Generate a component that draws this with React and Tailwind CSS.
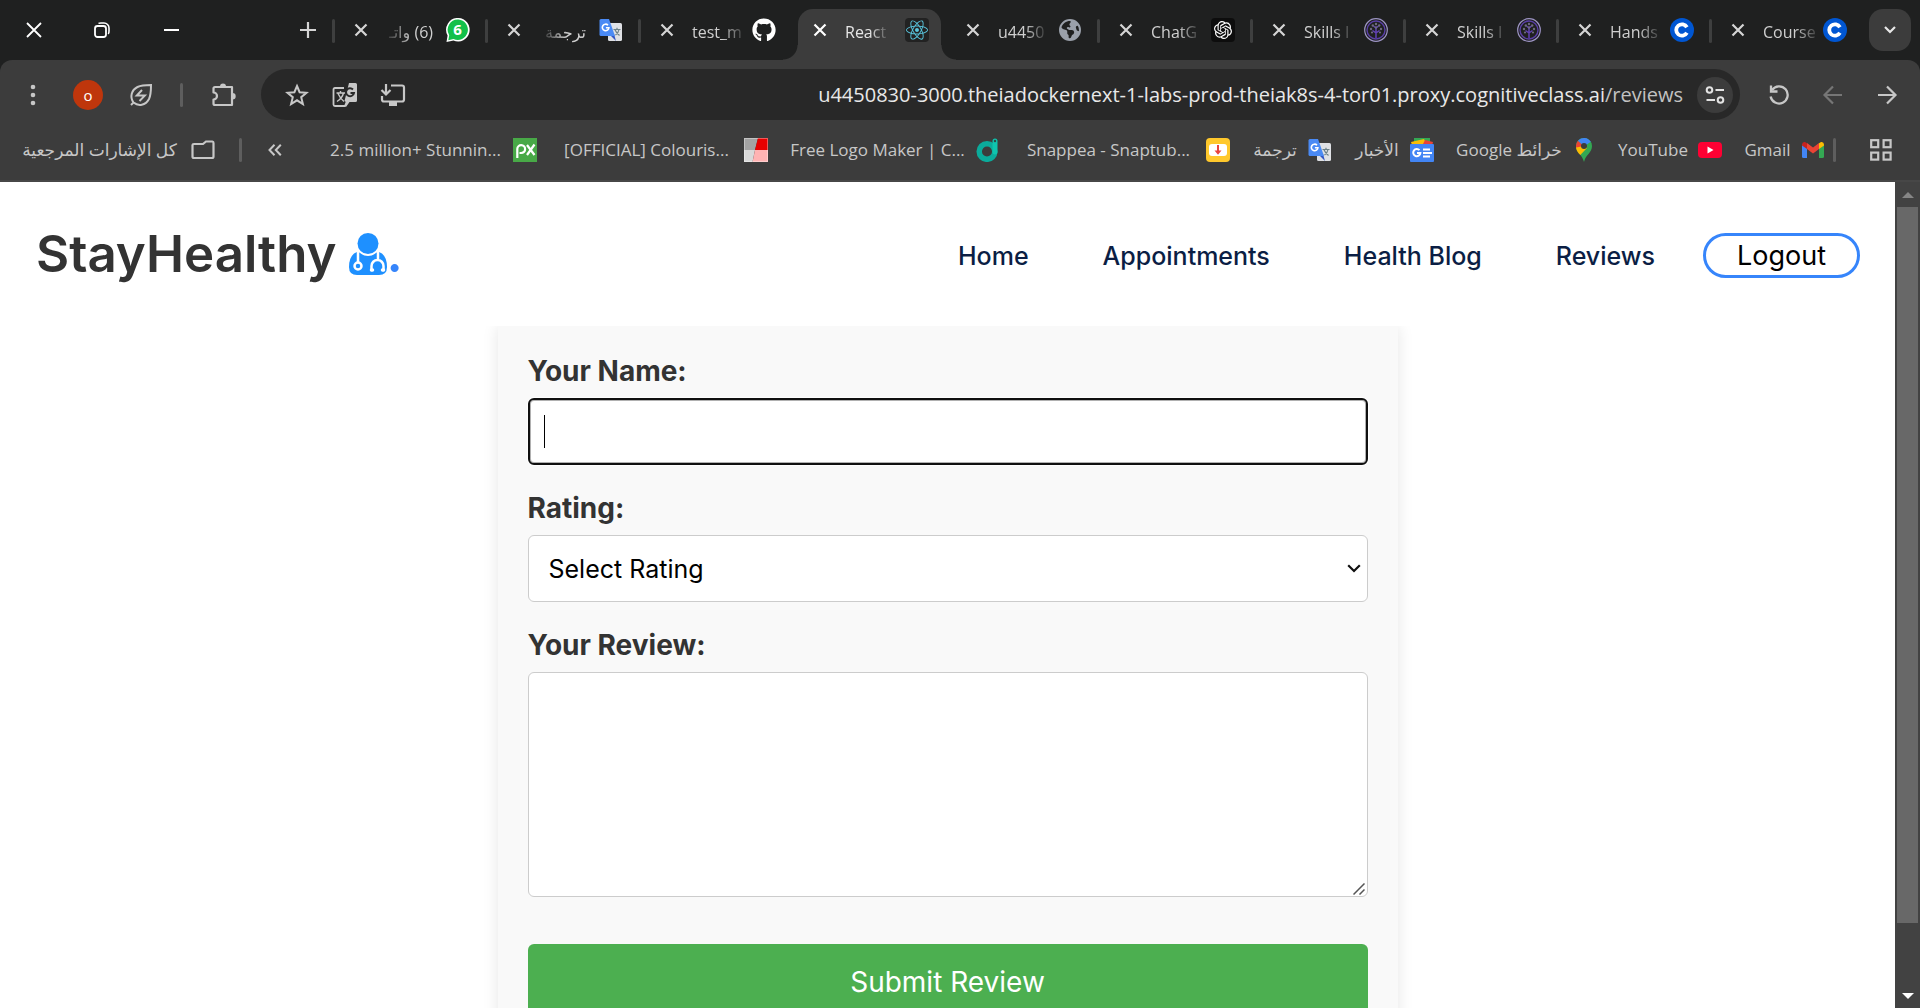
import React from "react";
import { FaGithub, FaReact, FaEarthAmericas } from "react-icons/fa6";
import { SiOpenai } from "react-icons/si";

const chromeFont = "font-['Open_Sans','Noto_Sans','DejaVu_Sans',sans-serif]";
const siteFont = "font-['Inter','Open_Sans',sans-serif]";

function TranslateLogo() {
  return (
    <svg viewBox="0 0 24 24" className="size-6 shrink-0" aria-hidden="true">
      <rect x="9" y="5" width="14" height="18" rx="1.5" fill="#dfe1e5" />
      <path d="M12 18 L17 23 L15 16 Z" fill="#3257c4" />
      <path d="M2 1 H10 L16 18 H2 Q0.500 18 0.500 16.500 V2.500 Q0.500 1 2 1 Z" fill="#4a8af4" />
      <path d="M9 7.200 A3.300 3.300 0 1 0 9.900 9.700 H6.900" fill="none" stroke="#fff" strokeWidth="1.600" />
      <path d="M14.500 11.500 H21.500 M18 9.800 V11.500 M20 11.500 C19.500 14.500 18 16 16.500 17 M16 11.800 C17 14.500 18.500 16 20.500 17.500" fill="none" stroke="#6b8087" strokeWidth="1.200" />
    </svg>
  );
}

function WhatsappLogo() {
  return (
    <svg viewBox="0 0 24 24" className="size-6 shrink-0" aria-hidden="true">
      <path d="M12.500 0 A11.500 11.800 0 1 1 7.500 22.600 L0.500 24 L1.600 17.500 A11.500 11.800 0 0 1 12.500 0 Z" fill="#fff" />
      <path d="M12.500 1.500 A10.100 10.300 0 1 1 7.500 21.100 L2.300 22.300 L3.200 17.200 A10.100 10.300 0 0 1 12.500 1.500 Z" fill="#12c04a" />
      <text x="11.500" y="17" textAnchor="middle" fontSize="15" fontWeight="700" fill="#fff" fontFamily="Open Sans, sans-serif">6</text>
    </svg>
  );
}

function SkillsLogo() {
  return (
    <svg viewBox="0 0 24 24" className="size-6 shrink-0" fill="none" aria-hidden="true">
      <circle cx="12" cy="12" r="11.300" stroke="#9d94c4" strokeWidth="1.200" />
      <circle cx="12" cy="12" r="9" stroke="#5a3fa6" strokeWidth="1.400" />
      <path d="M12 10 V20 M12 15 L8.500 12.500 M12 15 L15.500 12.500 M12 10 L9.500 8 M12 10 L14.500 8" stroke="#6242b5" strokeWidth="1.500" />
      <g fill="#6e6a80">
        <circle cx="12" cy="6" r="1.200" /><circle cx="8.800" cy="7.500" r="1.200" /><circle cx="15.200" cy="7.500" r="1.200" />
        <circle cx="7" cy="11" r="1.200" /><circle cx="17" cy="11" r="1.200" /><circle cx="12" cy="9.500" r="1.200" />
        <circle cx="8" cy="14.500" r="1.100" /><circle cx="16" cy="14.500" r="1.100" />
      </g>
    </svg>
  );
}

function CourseraLogo() {
  return (
    <svg viewBox="0 0 24 24" className="size-6 shrink-0" aria-hidden="true">
      <circle cx="12" cy="12" r="12" fill="#0056d2" />
      <path d="M16.900 9.200 A5.700 5.700 0 1 0 16.900 14.800" fill="none" stroke="#fff" strokeWidth="3.800" />
    </svg>
  );
}

function GithubLogo() {
  return <FaGithub className="size-6 shrink-0 text-white" />;
}

function ReactLogo() {
  return (
    <span className="grid size-6 shrink-0 place-items-center rounded bg-[#222222]">
      <FaReact className="size-[22px] text-[#58c4dc]" />
    </span>
  );
}

function GlobeLogo() {
  return <FaEarthAmericas className="size-[22px] shrink-0 text-[#9aa0aa]" />;
}

function ChatLogo() {
  return (
    <span className="grid size-6 shrink-0 place-items-center rounded bg-[#0d0d0d]">
      <SiOpenai className="size-[18px] text-white" />
    </span>
  );
}

const tabs = [
  { title: "(6) واتـ", logo: WhatsappLogo, rtl: true },
  { title: "ترجمة", logo: TranslateLogo, rtl: true },
  { title: "test_m", logo: GithubLogo },
  { title: "React", logo: ReactLogo, active: true },
  { title: "u4450", logo: GlobeLogo },
  { title: "ChatG", logo: ChatLogo },
  { title: "Skills I", logo: SkillsLogo },
  { title: "Skills I", logo: SkillsLogo },
  { title: "Hands", logo: CourseraLogo },
  { title: "Course", logo: CourseraLogo },
];

function Tab({ tab, divider }) {
  const Logo = tab.logo;
  return (
    <div className="relative flex h-full min-w-0 flex-1 items-end">
      {tab.active && (
        <div className="absolute inset-x-[5px] top-[9px] bottom-0 rounded-t-[15px] bg-[#3c3c3c]">
          <span className="absolute bottom-0 -left-[15px] size-[15px] bg-[radial-gradient(circle_at_0_0,transparent_14px,#3c3c3c_15px)]" />
          <span className="absolute -right-[15px] bottom-0 size-[15px] bg-[radial-gradient(circle_at_100%_0,transparent_14px,#3c3c3c_15px)]" />
        </div>
      )}
      <div className="relative flex h-full w-full items-center justify-between pr-[17px] pl-5">
        <button type="button" aria-label="Close tab" className="grid size-[14px] shrink-0 place-items-center">
          <svg viewBox="0 0 14 14" className={tab.active ? "size-[14px] text-white" : "size-[14px] text-[#d5d5d5]"} aria-hidden="true">
            <path d="M1.500 1.500 L12.500 12.500 M12.500 1.500 L1.500 12.500" stroke="currentColor" strokeWidth="2.200" />
          </svg>
        </button>
        <span className={tab.rtl ? "ml-auto mr-[13px] pt-1" : "mr-auto ml-[18px] pt-1"}>
          <span
            dir={tab.rtl ? "rtl" : "ltr"}
            className={
              "block text-[16px] leading-6 whitespace-nowrap " +
              (tab.rtl
                ? "[mask-image:linear-gradient(to_left,black_45%,#0003)] "
                : "[mask-image:linear-gradient(to_right,black_60%,#0003)] ") +
              (tab.active ? "text-[#e6e6e6]" : "text-[#cfcfcf]")
            }
          >
            {tab.title}
          </span>
        </span>
        <span className="grid size-6 shrink-0 place-items-center"><Logo /></span>
      </div>
      {divider && <span className="absolute top-[19px] -right-px h-6 w-[3px] rounded-full bg-[#3e3f3f]" />}
    </div>
  );
}

function TabStrip() {
  return (
    <div className="flex h-[60px] shrink-0 items-center bg-[#1f2020] pr-[9px]">
      <div className="flex h-full w-[334px] shrink-0 items-center">
        <button type="button" aria-label="Close" className="grid h-full w-[67px] place-items-center text-white">
          <svg viewBox="0 0 16 16" className="size-4" aria-hidden="true"><path d="M1 1 L15 15 M15 1 L1 15" stroke="currentColor" strokeWidth="1.800" /></svg>
        </button>
        <button type="button" aria-label="Restore" className="grid h-full w-[70px] place-items-center text-white">
          <svg viewBox="0 0 16 16" className="size-4" fill="none" aria-hidden="true">
            <rect x="1" y="4" width="11" height="11" rx="2.500" stroke="currentColor" strokeWidth="1.800" />
            <path d="M4.500 1.500 C5 1 6 1 7 1 H10 A5 5 0 0 1 15 6 V9 C15 10.500 14.800 11.500 14.200 12" stroke="currentColor" strokeWidth="1.600" />
          </svg>
        </button>
        <button type="button" aria-label="Minimise" className="grid h-full w-[68px] place-items-center text-white">
          <span className="h-[2px] w-[15px] bg-white" />
        </button>
        <button type="button" aria-label="New tab" className="ml-auto grid h-full w-[53px] place-items-center text-[#d5d5d5]">
          <svg viewBox="0 0 16 16" className="size-4" aria-hidden="true"><path d="M8 0 V16 M0 8 H16" stroke="currentColor" strokeWidth="2.200" /></svg>
        </button>
      </div>
      <div className="relative flex h-full min-w-0 flex-1">
        <span className="absolute top-[19px] -left-[2px] h-6 w-[3px] rounded-full bg-[#3e3f3f]" />
        {tabs.map((tab, i) => (
          <Tab key={i} tab={tab} divider={!tab.active && i < tabs.length - 1 && !tabs[i + 1].active} />
        ))}
      </div>
      <button type="button" aria-label="Search tabs" className="ml-[5px] grid size-[42px] shrink-0 place-items-center rounded-[14px] bg-[#3c3c3c] text-[#e8e8e8]">
        <svg viewBox="0 0 12 8" className="h-2 w-3" fill="none" aria-hidden="true"><path d="M1 1 L6 6 L11 1" stroke="currentColor" strokeWidth="2.200" /></svg>
      </button>
    </div>
  );
}

function Toolbar() {
  return (
    <div className="bg-[#1f2020]">
      <div className="flex h-[69px] items-center rounded-t-xl bg-[#3c3c3c] text-[#c7c7c7]">
        <button type="button" aria-label="Menu" className="grid h-10 w-[66px] shrink-0 place-items-center">
          <svg viewBox="0 0 6 22" className="h-[22px] w-[6px]" fill="currentColor" aria-hidden="true"><circle cx="3" cy="3" r="2.300" /><circle cx="3" cy="11" r="2.300" /><circle cx="3" cy="19" r="2.300" /></svg>
        </button>
        <button type="button" aria-label="Profile" className="ml-[7px] grid size-[30px] shrink-0 place-items-center rounded-full bg-[#bf360c] text-[15px] leading-5 text-white">o</button>
        <button type="button" aria-label="Energy saver" className="ml-[26px] shrink-0">
          <svg viewBox="0 0 24 24" className="size-6" fill="none" stroke="currentColor" strokeWidth="2" aria-hidden="true">
            <path d="M4.500 19.500 C0.500 14 2.500 7 8.500 4 C12.500 2 17 2 22 2 C22 7 22 12 20 16 C16.500 22.500 9.500 23.500 4.500 19.500 Z M4.500 19.500 L2 22" />
            <path d="M13 7 L7.800 12.600 H15.800 L10.500 18" strokeWidth="2" />
          </svg>
        </button>
        <span className="ml-[27px] h-6 w-[3px] shrink-0 rounded-full bg-[#5e5e5e]" />
        <button type="button" aria-label="Extensions" className="ml-[29px] shrink-0">
          <svg viewBox="0 0 24 24" className="size-6" fill="none" aria-hidden="true">
            <path d="M3 4 H20 V22 H3 Q1.500 22 1.500 20.500 V16.500 A3.500 3.500 0 0 0 1.500 9.500 V5.500 Q1.500 4 3 4 Z" stroke="currentColor" strokeWidth="2.200" strokeLinejoin="round" />
            <path d="M8 3.500 A3 3 0 0 1 14 3.500 Z M20.500 10 A3.200 3.200 0 0 1 20.500 16.400 Z" fill="currentColor" />
          </svg>
        </button>
        <div className="ml-[25px] flex h-[51px] min-w-0 flex-1 items-center rounded-full bg-[#282828] pr-[7px] pl-6">
          <button type="button" aria-label="Bookmark this page" className="shrink-0">
            <svg viewBox="0 0 24 24" className="size-6" fill="none" stroke="currentColor" strokeWidth="2" aria-hidden="true">
              <path d="M12 3 L14.600 9.200 L21.500 9.700 L16.200 14.200 L17.900 21 L12 17.300 L6.100 21 L7.800 14.200 L2.500 9.700 L9.400 9.200 Z" />
            </svg>
          </button>
          <button type="button" aria-label="Translate this page" className="ml-[23px] shrink-0">
            <svg viewBox="0 0 26 26" className="size-[26px]" fill="none" aria-hidden="true">
              <path d="M12 6 H3 Q1.500 6 1.500 7.500 V22.500 Q1.500 24 3 24 H13 L15 19" stroke="currentColor" strokeWidth="1.800" />
              <path d="M17 1 H23.500 Q25 1 25 2.500 V18.500 Q25 20 23.500 20 H17.500 L14 25 V20 L12.500 19 Z" fill="currentColor" />
              <path d="M21 7.500 A4 4 0 1 0 22 11 H18.500" stroke="#282828" strokeWidth="1.900" />
              <path d="M4.500 11 H13 M8.500 9 V11 M11.500 11 C10.500 15 7.500 18 5 19.500 M6 11.500 C7.500 15 9.500 17.500 12 19.500" stroke="currentColor" strokeWidth="1.400" />
            </svg>
          </button>
          <button type="button" aria-label="Install" className="ml-[22px] shrink-0">
            <svg viewBox="0 0 26 24" className="h-6 w-[26px]" fill="none" stroke="currentColor" strokeWidth="2.200" aria-hidden="true">
              <path d="M11 2.500 H22 Q24 2.500 24 4.500 V16.500 Q24 18.500 22 18.500 H4 Q2 18.500 2 16.500 V13" />
              <path d="M6 1 V11 M1.500 7 L6 11.500 L10.500 7" />
              <path d="M9 21 H17" strokeWidth="4" />
            </svg>
          </button>
          <div className="ml-auto min-w-0 overflow-hidden text-[20px] leading-7 whitespace-nowrap text-[#e8e8e8]">
            u4450830-3000.theiadockernext-1-labs-prod-theiak8s-4-tor01.proxy.cognitiveclass.ai<span className="text-[#c2c2c2]">/reviews</span>
          </div>
          <button type="button" aria-label="Site information" className="ml-[14px] grid size-9 shrink-0 place-items-center rounded-full bg-[#3c3c3c] text-[#e3e3e3]">
            <svg viewBox="0 0 20 18" className="h-[18px] w-5" fill="none" stroke="currentColor" strokeWidth="2" aria-hidden="true">
              <circle cx="4.500" cy="4" r="2.800" /><path d="M10.500 4 H19 M1.500 14 H10" /><circle cx="15.500" cy="14" r="2.800" />
            </svg>
          </button>
        </div>
        <div className="flex shrink-0 items-center gap-8 pr-[22px] pl-7">
          <button type="button" aria-label="Reload">
            <svg viewBox="0 0 22 22" className="size-[22px]" fill="none" stroke="currentColor" strokeWidth="2.300" aria-hidden="true">
              <path d="M4 6 A8.600 8.600 0 1 1 2.600 12.500" /><path d="M3 1.500 V7.500 H9.500" />
            </svg>
          </button>
          <button type="button" aria-label="Back" className="text-[#767676]">
            <svg viewBox="0 0 22 22" className="size-[22px]" fill="none" stroke="currentColor" strokeWidth="2.200" aria-hidden="true"><path d="M20 11 H3 M11 2.500 L2.500 11 L11 19.500" /></svg>
          </button>
          <button type="button" aria-label="Forward">
            <svg viewBox="0 0 22 22" className="size-[22px]" fill="none" stroke="currentColor" strokeWidth="2.200" aria-hidden="true"><path d="M2 11 H19 M11 2.500 L19.500 11 L11 19.500" /></svg>
          </button>
        </div>
      </div>
    </div>
  );
}

const PxLogo = () => (
  <svg viewBox="0 0 24 24" className="size-6" fill="none" aria-hidden="true">
    <rect width="24" height="24" fill="#48a947" />
    <path d="M4.300 20 V11 A3.900 3.900 0 1 1 8.200 15 H6.500 M14 7 L21.500 17 M21.500 6.500 L14 17" stroke="#fff" strokeWidth="2.200" />
  </svg>
);
const ColourLogo = () => (
  <svg viewBox="0 0 24 24" className="size-6" aria-hidden="true">
    <path d="M0 0 H14 L11 12 H0 Z" fill="#a3a3a3" /><path d="M14 0 H24 V12 H11 Z" fill="#e60000" />
    <path d="M0 12 H11 L8.500 24 H0 Z" fill="#d9d9d9" /><path d="M11 12 H24 V24 H8.500 Z" fill="#ffb3b3" />
    <rect x="0.500" y="0.500" width="23" height="23" fill="none" stroke="#fff" strokeOpacity="0.350" />
  </svg>
);
const DesignLogo = () => (
  <svg viewBox="0 0 24 24" className="size-6" fill="none" aria-hidden="true">
    <circle cx="12" cy="13.500" r="7.800" stroke="#0bab9b" strokeWidth="5.500" />
    <path d="M20 3 V14" stroke="#0fc4ae" strokeWidth="5" strokeLinecap="round" />
    <circle cx="20" cy="3" r="1.200" fill="#2c4a48" />
  </svg>
);
const SnapLogo = () => (
  <svg viewBox="0 0 24 24" className="size-6" aria-hidden="true">
    <rect width="24" height="24" rx="4" fill="#ffc82c" />
    <rect x="3" y="6" width="18" height="12" rx="3" fill="#fff" />
    <path d="M12 7 V14" stroke="#e9433c" strokeWidth="2" /><path d="M8.500 12.500 H15.500 L12 16.800 Z" fill="#e9433c" />
  </svg>
);
const NewsLogo = () => (
  <svg viewBox="0 0 24 24" className="size-6" fill="none" aria-hidden="true">
    <path d="M4 0 H20 V6 H4 Z" fill="#34a853" /><path d="M1 4 L14 1 L17 7 H2 Z" fill="#fbbc04" /><path d="M15 2 L23 4 L22 8 H12 Z" fill="#ea4335" />
    <rect y="6" width="24" height="18" rx="1" fill="#4285f4" />
    <path d="M9.500 12.200 A3.600 3.600 0 1 0 10.400 15 H7" stroke="#fff" strokeWidth="2" />
    <path d="M13 11.500 H20 M13 15 H22 M13 18.500 H20" stroke="#fff" strokeWidth="1.800" />
  </svg>
);
const MapsLogo = () => (
  <svg viewBox="0 0 24 24" className="size-6" aria-hidden="true">
    <path d="M12 0 A8 8 0 0 1 20 8 C20 15 14 16 12 24 C10 16 4 15 4 8 A8 8 0 0 1 12 0 Z" fill="#34a853" />
    <path d="M4 8 C4 12.500 6 14.500 8.300 17 L15 10 L9 5 Z" fill="#fbbc04" />
    <path d="M6 2.700 C4 5 3.900 7.500 4.100 9.500 L12 8 Z" fill="#ea4335" />
    <path d="M6 2.700 A8 8 0 0 1 18.800 3.800 L12 8.500 Z" fill="#4285f4" />
    <circle cx="12" cy="8" r="3" fill="#3c3c3c" />
  </svg>
);
const YoutubeLogo = () => (
  <svg viewBox="0 0 24 24" className="size-6" aria-hidden="true">
    <rect y="4" width="24" height="16" rx="4" fill="#ff0033" /><path d="M9.500 8.500 V15.500 L15.500 12 Z" fill="#fff" />
  </svg>
);
const GmailLogo = () => (
  <svg viewBox="0 0 24 24" className="size-6" aria-hidden="true">
    <path d="M1 6 L6 9.500 V20 H2.500 Q1 20 1 18.500 Z" fill="#4285f4" />
    <path d="M23 6 L18 9.500 V20 H21.500 Q23 20 23 18.500 Z" fill="#34a853" />
    <path d="M6 5 L12 9.500 L18 5 V11 L12 15.500 L6 11 Z" fill="#ea4335" />
    <path d="M1 6.500 Q1.200 3.500 4 4 L6 5.200 V11 L1 7.500 Z" fill="#c5221f" />
    <path d="M23 6.500 Q22.800 3.500 20 4 L18 5.200 V11 L23 7.500 Z" fill="#fbbc04" />
  </svg>
);

const bookmarks = [
  { name: "2.5 million+ Stunnin...", logo: PxLogo, width: "w-[171px]" },
  { name: "[OFFICIAL] Colouris...", logo: ColourLogo, width: "w-[171px]" },
  { name: "Free Logo Maker | C...", logo: DesignLogo, width: "w-[171px]" },
  { name: "Snappea - Snaptub...", logo: SnapLogo, width: "w-[171px]" },
  { name: "ترجمة", logo: TranslateLogo, width: "w-[42px]" },
  { name: "الأخبار", logo: NewsLogo, width: "w-[42px]" },
  { name: "خرائط Google", logo: MapsLogo, width: "w-[102px]" },
  { name: "YouTube", logo: YoutubeLogo, width: "w-[66px]" },
  { name: "Gmail", logo: GmailLogo, width: "w-[43px]" },
];

function BookmarksBar() {
  return (
    <div className="flex h-[53px] shrink-0 items-center justify-between border-b-2 border-[#474747] bg-[#3c3c3c] pb-[9px] text-[17px] leading-6 text-[#c7c7c7]">
      <div className="flex items-center pl-[22px]">
        <button type="button" className="flex items-center gap-[14px]">
          <span dir="rtl" className="w-[155px] text-[17px] whitespace-nowrap">كل الإشارات المرجعية</span>
          <svg viewBox="0 0 24 20" className="h-5 w-6" fill="none" stroke="currentColor" strokeWidth="2.200" aria-hidden="true">
            <path d="M1.500 5 Q1.500 4 3 4 H12 L15 1.500 H21.500 Q22.500 1.500 22.500 3 V16.500 Q22.500 18 21 18 H3 Q1.500 18 1.500 16.500 Z" />
          </svg>
        </button>
        <span className="ml-6 h-6 w-[3px] rounded-full bg-[#5e5e5e]" />
        <button type="button" aria-label="More bookmarks" className="ml-[26px]">
          <svg viewBox="0 0 14 12" className="h-3 w-[14px]" fill="none" stroke="currentColor" strokeWidth="2" aria-hidden="true"><path d="M6.500 0.800 L1.500 6 L6.500 11.200 M12.800 0.800 L7.800 6 L12.800 11.200" /></svg>
        </button>
      </div>
      <div className="flex items-center">
        <div className="flex items-center gap-6">
          {bookmarks.map(({ name, logo: Logo, width }) => (
            <a key={name} href="#bookmark" dir="rtl" className="flex items-center gap-3">
              <Logo />
              <span dir="auto" className={width + " flex justify-center whitespace-nowrap"}>{name}</span>
            </a>
          ))}
        </div>
        <span className="ml-2 h-6 w-[3px] rounded-full bg-[#5e5e5e]" />
        <button type="button" aria-label="Tab groups" className="mr-[28px] ml-[34px]">
          <svg viewBox="0 0 22 22" className="size-[22px]" fill="none" stroke="currentColor" strokeWidth="2.200" aria-hidden="true">
            <rect x="1.200" y="1.200" width="7" height="7" /><rect x="13.600" y="1.200" width="7" height="7" />
            <rect x="1.200" y="13.600" width="7" height="7" /><rect x="13.600" y="13.600" width="7" height="7" />
          </svg>
        </button>
      </div>
    </div>
  );
}

function DoctorLogo() {
  return (
    <svg viewBox="0 0 38 42" className="ml-3 h-[42px] w-[38px]" fill="none" aria-hidden="true">
      <path d="M8 19 H30 Q38 22 38 34 Q38 42 30 42 H8 Q0 42 0 34 Q0 22 8 19 Z" fill="#1e90ff" />
      <circle cx="19" cy="10.500" r="12.500" fill="#fff" />
      <circle cx="19" cy="10.500" r="10.500" fill="#1e90ff" />
      <g stroke="#fff" strokeWidth="2.500" strokeLinecap="round">
        <path d="M9 18 V29" />
        <circle cx="9" cy="33" r="3.500" />
        <path d="M29 18 V27 M22.500 37 V33 A6 6 0 0 1 34.500 33 V37" />
        <path d="M22.500 37 H23.500 M34.500 37 H33.500" strokeWidth="3.500" />
      </g>
    </svg>
  );
}

function SiteHeader() {
  return (
    <header className="flex h-36 shrink-0 items-center justify-between bg-white pr-[35px] pl-9">
      <a href="#home" className="flex items-center text-[51px] leading-[72px] font-semibold text-[#333333]">
        StayHealthy
        <DoctorLogo />
        <span className="text-[#3685fb]">.</span>
      </a>
      <nav className="flex items-center pt-[3px] text-[25px] leading-9 font-medium text-[#0b1e44]">
        <ul className="flex items-center gap-[74px]">
          <li><a href="#home">Home</a></li>
          <li><a href="#appointments">Appointments</a></li>
          <li><a href="#blog">Health Blog</a></li>
          <li><a href="#reviews">Reviews</a></li>
        </ul>
        <button type="button" className="ml-12 grid h-[45px] w-[157px] place-items-center rounded-full border-3 border-[#3685fb] bg-white text-[27px] leading-9 font-normal text-black">
          Logout
        </button>
      </nav>
    </header>
  );
}

function ReviewForm() {
  const label = "mb-[7px] block text-[28px] leading-10 font-bold text-[#333333]";
  const field = "block w-full rounded-md bg-white";
  return (
    <form className="mx-auto w-full max-w-[900px] bg-[#f9f9f9] px-[30px] pt-[25px] pb-[30px] shadow-[0_0_15px_rgba(0,0,0,0.1)]">
      <div className="mb-[23px]">
        <label htmlFor="name" className={label}>Your Name:</label>
        <div className="relative">
          <input id="name" type="text" className={field + " h-[67px] border-2 border-[#101010] px-[14px] text-[25px] shadow-[inset_0_0_0_1px_#b0b0b0,0_0_0_1px_#ffffff] outline-none"} />
          <span className="pointer-events-none absolute inset-y-[17px] left-4 w-px bg-black" />
        </div>
      </div>
      <div className="mb-[23px]">
        <label htmlFor="rating" className={label}>Rating:</label>
        <div className="relative">
          <select id="rating" defaultValue="" className={field + " h-[67px] appearance-none border border-[#cccccc] px-5 text-[25px] leading-9 text-black"}>
            <option value="">Select Rating</option>
            <option value="1">1</option>
            <option value="2">2</option>
            <option value="3">3</option>
            <option value="4">4</option>
            <option value="5">5</option>
          </select>
          <svg viewBox="0 0 14 9" className="pointer-events-none absolute top-[29px] right-[7px] h-[9px] w-[14px]" fill="none" aria-hidden="true"><path d="M1.200 1.200 L7 7 L12.800 1.200" stroke="#101010" strokeWidth="2.200" /></svg>
        </div>
      </div>
      <div className="mb-[47px]">
        <label htmlFor="review" className={label}>Your Review:</label>
        <div className="relative">
          <textarea id="review" className={field + " h-[225px] resize-none border border-[#cccccc] p-[15px] text-[25px]"} />
          <svg viewBox="0 0 12 12" className="pointer-events-none absolute right-[3px] bottom-[2px] size-3" fill="none" aria-hidden="true"><path d="M0.500 11.500 L11.500 0.500 M6.500 11.500 L11.500 6.500" stroke="#555555" strokeWidth="1.500" /></svg>
        </div>
      </div>
      <button type="submit" className="block w-full rounded-md bg-[#4caf50] py-[18px] text-[28px] leading-10 text-white">Submit Review</button>
    </form>
  );
}

function PageScrollbar() {
  return (
    <div aria-hidden="true" className="flex w-[25px] shrink-0 flex-col items-center bg-[#424242]">
      <span className="grid h-[25px] w-full shrink-0 place-items-center">
        <svg viewBox="0 0 12 6" className="h-[6px] w-3" fill="#868686"><path d="M0 6 L6 0 L12 6 Z" /></svg>
      </span>
      <span className="w-[21px] grow-[716] bg-[#686868]" />
      <span className="grow-[60]" />
      <span className="grid h-[25px] w-full shrink-0 place-items-center">
        <svg viewBox="0 0 12 6" className="h-[6px] w-3" fill="#ffffff"><path d="M0 0 L6 6 L12 0 Z" /></svg>
      </span>
    </div>
  );
}

export default function App() {
  return (
    <div className="flex h-screen flex-col overflow-hidden bg-white">
      <div className={chromeFont}>
        <TabStrip />
        <Toolbar />
        <BookmarksBar />
      </div>
      <div className={"flex min-h-0 flex-1 " + siteFont}>
        <div className="flex min-w-0 flex-1 flex-col">
          <div className="relative z-10">
            <SiteHeader />
          </div>
          <main className="min-h-0 flex-1 overflow-hidden">
            <ReviewForm />
          </main>
        </div>
        <PageScrollbar />
      </div>
    </div>
  );
}
